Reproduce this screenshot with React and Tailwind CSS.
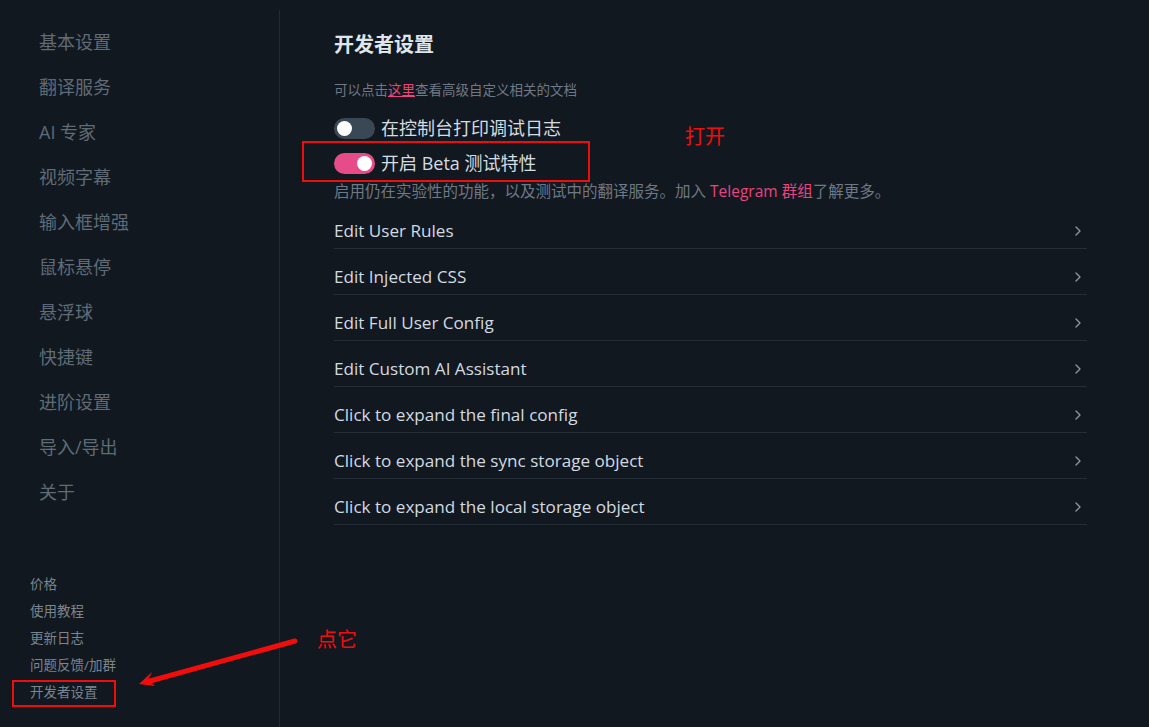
import React from "react";
import { ChevronRight } from "lucide-react";

const navItems = [
  "基本设置",
  "翻译服务",
  "AI 专家",
  "视频字幕",
  "输入框增强",
  "鼠标悬停",
  "悬浮球",
  "快捷键",
  "进阶设置",
  "导入/导出",
  "关于",
];

const footerLinks = ["价格", "使用教程", "更新日志", "问题反馈/加群", "开发者设置"];

const rows = [
  "Edit User Rules",
  "Edit Injected CSS",
  "Edit Full User Config",
  "Edit Custom AI Assistant",
  "Click to expand the final config",
  "Click to expand the sync storage object",
  "Click to expand the local storage object",
];

const font = {
  fontFamily:
    '"Open Sans", "Noto Sans", "Noto Sans CJK SC", sans-serif',
};

function Toggle({ on }) {
  return (
    <div
      className={`w-[41px] h-[21px] rounded-full flex items-center px-[3px] shrink-0 ${
        on ? "bg-[#e84c88] justify-end" : "bg-[#3a4855] justify-start"
      }`}
    >
      <div className="w-[15px] h-[15px] rounded-full bg-white" />
    </div>
  );
}

export default function App() {
  return (
    <div
      className="relative w-full h-[727px] bg-[#121820] flex overflow-hidden"
      style={font}
    >
      {/* Sidebar */}
      <div className="w-[280px] shrink-0 mt-[10px] border-r border-[#222a33] flex flex-col justify-between">
        <div className="pt-[10px] pl-[39px]">
          {navItems.map((item) => (
            <div
              key={item}
              className="h-[45px] leading-[45px] text-[18px] text-[#5f6b76]"
            >
              {item}
            </div>
          ))}
        </div>
        <div className="pl-[30px] pb-[21px]">
          {footerLinks.map((item) => (
            <div
              key={item}
              className="h-[27px] leading-[27px] text-[13.5px] text-[#7a858f]"
            >
              {item}
            </div>
          ))}
        </div>
      </div>

      {/* Main */}
      <div className="flex-1 pl-[54px] pt-[33px]">
        <div className="w-[753px]">
          <h1 className="text-[20px] leading-[24px] font-bold text-[#dfe5ea]">
            开发者设置
          </h1>
          <p className="mt-[26px] text-[13.5px] leading-[14px] text-[#6e7985]">
            可以点击<span className="text-[#e8457f] underline">这里</span>
            查看高级自定义相关的文档
          </p>
          <div className="mt-[19px] flex items-center gap-[6px] h-[24px]">
            <Toggle on={false} />
            <span className="text-[18px] text-[#d5dce2]">在控制台打印调试日志</span>
          </div>
          <div className="mt-[11px] flex items-center gap-[6px] h-[24px]">
            <Toggle on />
            <span className="text-[18px] text-[#d5dce2]">开启 Beta 测试特性</span>
          </div>
          <p className="mt-[6px] text-[15.5px] leading-[20px] text-[#6e7985]">
            启用仍在实验性的功能，以及测试中的翻译服务。加入{" "}
            <span className="text-[#e8457f]">Telegram 群组</span>了解更多。
          </p>
          <div className="mt-[2px]">
            {rows.map((row) => (
              <div
                key={row}
                className="flex items-center justify-between pt-[16px] pb-[5px] border-b border-[#252d36]"
              >
                <span className="text-[17.1px] leading-[24px] text-[#d3dae0]">
                  {row}
                </span>
                <ChevronRight
                  className="w-[16px] h-[16px] text-[#8b96a0] mr-[1px]"
                  strokeWidth={2}
                />
              </div>
            ))}
          </div>
        </div>
      </div>

      {/* Annotations */}
      <div className="absolute left-[12px] top-[680px] w-[104px] h-[27px] border-2 border-[#f20d0d]" />
      <div className="absolute left-[302px] top-[141px] w-[288px] h-[41px] border-2 border-[#f20d0d]" />
      <div className="absolute left-[685px] top-[124px] text-[20px] leading-[26px] text-[#f20d0d]">
        打开
      </div>
      <div className="absolute left-[317px] top-[627px] text-[20px] leading-[26px] text-[#f20d0d]">
        点它
      </div>
      <svg
        className="absolute left-0 top-0"
        width="1149"
        height="727"
        viewBox="0 0 1149 727"
      >
        <line
          x1="295"
          y1="641"
          x2="150"
          y2="681"
          stroke="#f20d0d"
          strokeWidth="5"
          strokeLinecap="round"
        />
        <polygon points="139,684 152,672 148,680 155,686" fill="#f20d0d" />
      </svg>
    </div>
  );
}
